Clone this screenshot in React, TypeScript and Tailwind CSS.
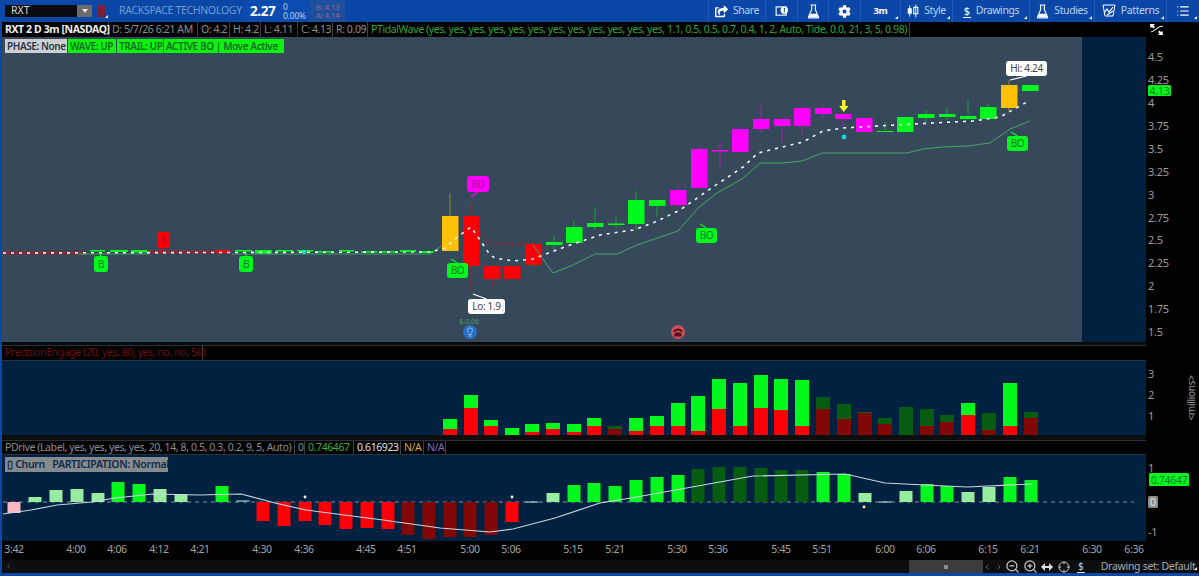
import type { ReactNode } from "react"
import { FaShareSquare, FaCog } from "react-icons/fa"
import { ChevronLeft, ChevronRight, Crosshair, List, Lightbulb, ZoomIn, ZoomOut } from "lucide-react"

const LIME = "#03f91d"
const RED = "#fb0007"
const PINK = "#ff00ff"
const ORANGE = "#ffc107"
const DKGREEN = "#075c12"
const DKRED = "#820808"

type Candle = [number, number, number, number, number, string]

// x, body top, body bottom, wick top, wick bottom, colour
const candles: Candle[] = [
  [450, 216, 251, 193, 251, ORANGE],
  [471, 216, 266, 203, 292, RED],
  [492, 266, 279, 266, 287, RED],
  [512, 266, 279, 266, 279, RED],
  [533, 244, 265, 242, 265, RED],
  [554, 242, 245, 236, 250, LIME],
  [574, 227, 243, 221, 243, LIME],
  [595, 223, 227, 207, 230, LIME],
  [616, 223.5, 225, 217, 227, LIME],
  [636, 200, 224, 191, 230, LIME],
  [657, 200, 206, 200, 217, LIME],
  [678, 190, 205, 183, 208, PINK],
  [699, 149, 188, 146, 188, PINK],
  [720, 150, 151.5, 142, 167, PINK],
  [740, 129, 152, 126, 152, PINK],
  [761, 119, 129, 104, 133, PINK],
  [782, 119, 126, 119, 143, PINK],
  [802, 108, 126, 106, 136, PINK],
  [823, 108, 114, 103, 118, PINK],
  [843, 114, 119, 114, 128, PINK],
  [864, 118, 132, 118, 132, PINK],
  [885, 131, 132, 122, 132, LIME],
  [905, 117, 132, 117, 132, LIME],
  [926, 114, 118, 110, 122, LIME],
  [947, 114, 117, 108, 120, LIME],
  [968, 116, 119, 100, 120, LIME],
  [988, 107, 119, 104, 119, LIME],
  [1009, 85, 108, 80, 112, ORANGE],
  [1030, 85, 91, 85, 92, LIME],
]

const flat: [number, number, number, number, string][] = [
  [90, 250, 15, 1.5, LIME],
  [110, 250, 18, 2, LIME],
  [131, 250, 16, 2.5, LIME],
  [215, 250, 15, 3, RED],
  [235, 250, 17, 1.5, LIME],
  [255, 250, 17, 3.5, LIME],
  [276, 250, 17, 1.5, LIME],
  [297, 250, 16, 1.5, LIME],
  [315, 251, 18, 1.5, LIME],
  [339, 250, 15, 1.5, LIME],
  [361, 251, 16, 1.5, LIME],
  [381, 251, 16, 1.5, LIME],
  [400, 250, 16, 2, LIME],
  [419, 251, 14, 2, LIME],
]

const volume: [number, number, number, boolean][] = [
  [450, 419, 429, true],
  [471, 395, 408, true],
  [491, 420, 426, true],
  [512, 428, 435, true],
  [532, 424, 432, true],
  [553, 423, 429, true],
  [574, 424, 432, true],
  [594, 418, 426, true],
  [615, 426, 429, false],
  [636, 418, 431, true],
  [657, 416, 426, true],
  [678, 403, 426, true],
  [698, 396, 431, true],
  [719, 379, 409, true],
  [740, 383, 426, true],
  [761, 375, 408, true],
  [781, 379, 410, true],
  [802, 380, 426, true],
  [823, 397, 409, false],
  [844, 404, 419, false],
  [865, 412, 413, false],
  [885, 418, 424, false],
  [906, 407, 435, false],
  [927, 409, 426, false],
  [947, 415, 422, false],
  [968, 403, 415, true],
  [989, 413, 430, false],
  [1010, 383, 426, true],
  [1031, 412, 418, false],
]

const LIGHT = "#98ec9f"
const drive: [number, number, number, string][] = [
  [14, 502, 513, "#ffb6c4"],
  [35, 497, 502, LIGHT],
  [56, 490, 502, LIGHT],
  [77, 489, 502, LIGHT],
  [98, 493, 502, LIGHT],
  [118, 482, 502, LIME],
  [139, 484, 502, LIME],
  [160, 489, 502, LIGHT],
  [181, 494, 502, LIGHT],
  [222, 486, 502, LIME],
  [243, 500.5, 501.5, "#cfe8e8"],
  [263, 502, 521, RED],
  [284, 502, 526, RED],
  [305, 502, 521, RED],
  [325, 502, 525, RED],
  [346, 502, 529, RED],
  [367, 502, 528, RED],
  [388, 502, 529, RED],
  [408, 502, 535, DKRED],
  [429, 502, 539, DKRED],
  [450, 502, 537, DKRED],
  [470, 502, 537, DKRED],
  [491, 502, 535, DKRED],
  [512, 502, 522, RED],
  [532, 501.5, 502.5, "#cfe8e8"],
  [553, 493, 502, LIGHT],
  [574, 485, 502, LIME],
  [594, 483, 502, LIME],
  [615, 486, 502, LIME],
  [636, 480, 502, LIME],
  [657, 477, 502, LIME],
  [678, 475, 502, LIME],
  [698, 469, 502, DKGREEN],
  [719, 467, 502, DKGREEN],
  [740, 467, 502, DKGREEN],
  [761, 468, 502, DKGREEN],
  [781, 470, 502, DKGREEN],
  [802, 470, 502, DKGREEN],
  [823, 472, 502, LIME],
  [844, 474, 502, LIME],
  [865, 493, 502, LIGHT],
  [885, 501.5, 502.5, "#cfe8e8"],
  [906, 491, 502, LIGHT],
  [927, 484, 502, LIME],
  [947, 486, 502, LIME],
  [968, 492, 502, LIGHT],
  [989, 487, 502, LIGHT],
  [1010, 477, 502, LIME],
  [1031, 480, 502, LIME],
]

const times: [string, number][] = [
  ["3:42", 14], ["4:00", 76], ["4:06", 117], ["4:12", 159], ["4:21", 200], ["4:30", 262],
  ["4:36", 304], ["4:45", 366], ["4:51", 407], ["5:00", 470], ["5:06", 511], ["5:15", 573],
  ["5:21", 615], ["5:30", 677], ["5:36", 718], ["5:45", 781], ["5:51", 822], ["6:00", 885],
  ["6:06", 926], ["6:15", 988], ["6:21", 1030], ["6:30", 1092], ["6:36", 1134],
]

const prices: [string, number][] = [
  ["4.5", 57], ["4.25", 80], ["4", 103], ["3.75", 126], ["3.5", 149], ["3.25", 172], ["3", 195],
  ["2.75", 218], ["2.5", 240], ["2.25", 263], ["2", 286], ["1.75", 309], ["1.5", 332],
]

const wave =
  "M3 253 L430 252 L445 248 L460 235 L471 227 L480 240 L490 255 L495 258 L513 261 L533 259 L543 255 L573 244 L600 235 L633 230 L653 223 L680 210 L713 187 L743 167 L758 153 L803 142 L823 131 L843 128 L913 124 L973 121 L1000 117 L1027 102"
const trail =
  "M533 245 L553 273 L573 265 L595 254 L617 254 L637 245 L678 231 L698 208 L717 193 L742 179 L760 163 L782 163 L802 161 L822 153 L907 153 L923 149 L943 147 L968 146 L990 143 L1010 129 L1030 121"
const driveLine =
  "M3 514 L31 510 L57 505 L92 502 L115 498 L153 494 L199 495 L241 494 L275 503 L306 510 L344 515 L383 520 L440 528 L490 532 L513 529 L555 518 L600 503 L631 498 L692 487 L753 476 L845 474 L885 483 L925 485 L967 487 L1032 484"

const FONT = "'Noto Sans', 'Open Sans', sans-serif"

function Bubble({ x, y, w, h, fill, text, tx, ty, color, size = 10 }: {
  x: number; y: number; w: number; h: number; fill: string; text: string
  tx: number; ty: number; color: string; size?: number
}) {
  const up = ty < y
  return (
    <g>
      <line x1={x + w / 2} y1={up ? y : y + h} x2={tx} y2={ty} stroke={fill} strokeWidth="1.2" />
      <rect x={x} y={y} width={w} height={h} rx="3" fill={fill} />
      <text x={x + w / 2} y={y + h / 2 + size * 0.36} textAnchor="middle" fontSize={size} letterSpacing="-0.3" fill={color} fontFamily={FONT}>{text}</text>
    </g>
  )
}

function ChartSvg() {
  return (
    <svg viewBox="2 37 1144 305" className="block h-[305px] w-[1144px]">
      <rect x="1082" y="37" width="64" height="305" fill="#00213f" />
      <path d="M3 253 H85 M147 252 H232" stroke="#8a2a38" strokeWidth="3" fill="none" />
      <path d="M78 254 H150 M232 254 L430 254 L443 245 L458 232" stroke="#3f9f5c" strokeWidth="1" fill="none" />
      <path d="M458 232 L478 230 L490 244 L533 244 L543 256" stroke="#8f2432" strokeWidth="1" fill="none" />
      {flat.map(([x, y, w, h, c]) => (
        <rect key={x} x={x} y={y} width={w} height={h} fill={c} />
      ))}
      {candles.map(([x, top, bottom, wt, wb, c]) => (
        <g key={x}>
          <line x1={x} x2={x} y1={wt} y2={wb} stroke={c} strokeWidth="1" opacity="0.5" />
          <rect x={x - 8} y={top} width="16.5" height={bottom - top} fill={c} />
        </g>
      ))}
      <path d={trail} stroke="#4aa463" strokeWidth="1" fill="none" />
      <path d={wave} stroke="#f2f5f7" strokeWidth="1.6" strokeDasharray="3 5" fill="none" />
      <circle cx="304" cy="252" r="2" fill="#19e6e6" />
      <circle cx="844" cy="137" r="2.4" fill="#19d4e6" />
      <path d="M842 100 h3.5 v6 h3 l-4.7 6 l-4.7 -6 h2.9 z" fill="#f5f22a" />
      <Bubble x={94} y={256} w={14} h={16} fill={LIME} text="B" tx={100} ty={253} color="#0a7a2a" />
      <Bubble x={239} y={256} w={14} h={16} fill={LIME} text="B" tx={246} ty={253} color="#0a7a2a" />
      <Bubble x={157} y={232} w={13} h={16} fill={RED} text="S" tx={160} ty={253} color="#a0101a" />
      <Bubble x={467} y={176} w={22} h={16} fill={PINK} text="BD" tx={471} ty={197} color="#a010a8" />
      <Bubble x={447} y={263} w={21} h={15} fill={LIME} text="BO" tx={451} ty={259} color="#0a7a2a" />
      <Bubble x={696} y={228} w={21} h={15} fill={LIME} text="BO" tx={700} ty={224} color="#0a7a2a" />
      <Bubble x={1007} y={136} w={21} h={15} fill={LIME} text="BO" tx={1011} ty={132} color="#0a7a2a" />
      <Bubble x={468} y={299} w={37} h={15} fill="#ffffff" text="Lo: 1.9" tx={473} ty={294} color="#444" />
      <Bubble x={1006} y={61} w={41} h={15} fill="#ffffff" text="Hi: 4.24" tx={1010} ty={80} color="#444" />
      <text x="469" y="324" textAnchor="middle" fontSize="7" fill="#4f9a70" fontFamily={FONT}>$-0.06</text>
      <circle cx="470" cy="332" r="7" fill="#2a6fc4" />
      <circle cx="678" cy="332" r="7" fill="#c8505c" />
      <foreignObject x="465" y="327" width="10" height="10">
        <Lightbulb size={10} color="#9fd0ff" />
      </foreignObject>
      <path d="M673.5 330.5 Q678 326.5 682.5 330.5 V332 H680.5 V330.8 H675.5 V332 H673.5 Z M675 332.5 H681 L682 336.5 H674 Z" fill="#5a1018" />
    </svg>
  )
}

function VolumeSvg() {
  return (
    <svg viewBox="2 361 1144 74" className="block h-[74px] w-[1144px]">
      {volume.map(([x, top, mid, bright]) => (
        <g key={x}>
          <rect x={x - 7} y={top} width="14" height={mid - top} fill={bright ? LIME : DKGREEN} />
          <rect x={x - 7} y={mid} width="14" height={435 - mid} fill={bright ? RED : DKRED} />
        </g>
      ))}
    </svg>
  )
}

function DriveSvg() {
  return (
    <svg viewBox="2 455 1144 86" className="block h-[86px] w-[1144px]">
      <line x1="3" x2="1134" y1="502" y2="502" stroke="#7f93a3" strokeWidth="1" strokeDasharray="4 4" />
      {drive.map(([x, top, bottom, c]) => (
        <rect key={x} x={x - 6.5} y={top} width="13" height={bottom - top} fill={c} />
      ))}
      <path d={driveLine} stroke="#c9d6e0" strokeWidth="1.2" fill="none" />
      <circle cx="305" cy="497" r="1.4" fill="#fff" />
      <circle cx="512" cy="497" r="1.4" fill="#fff" />
      <circle cx="864" cy="507" r="1.4" fill="#ffe9a0" />
    </svg>
  )
}

function AxisSvg() {
  return (
    <svg viewBox="1146 22 53 538" className="block h-[538px] w-[53px]">
      <g fill="#9c9c9c" fontSize="11" letterSpacing="-0.3" fontFamily={FONT}>
        {prices.map(([p, y]) => (
          <text key={p} x="1148" y={y + 4}>{p}</text>
        ))}
        <text x="1148" y="378">3</text>
        <text x="1148" y="399">2</text>
        <text x="1148" y="420">1</text>
        <text x="1148" y="472">1</text>
        <text x="1148" y="536">-1</text>
        <text transform="translate(1195 398) rotate(-90)" textAnchor="middle" fontSize="10">{"<millions>"}</text>
      </g>
      <rect x="1148" y="85" width="23" height="11" rx="1.5" fill={LIME} />
      <text x="1159.5" y="94.5" textAnchor="middle" fontSize="11" letterSpacing="-0.3" fill="#0f7a2c" fontFamily={FONT}>4.13</text>
      <rect x="1149" y="473" width="40" height="13" rx="1.5" fill={LIME} />
      <text x="1169" y="484" textAnchor="middle" fontSize="10.5" letterSpacing="-0.3" fill="#0f7a2c" fontFamily={FONT}>0.74647</text>
      <rect x="1148" y="496" width="10" height="12" rx="1.5" fill="#8c8c8c" />
      <text x="1153" y="506" textAnchor="middle" fontSize="11" fill="#e8e8e8" fontFamily={FONT}>0</text>
      <path d="M1151 32 C1157 31 1156 26 1163 26" stroke="#e6e6e6" strokeWidth="1.1" fill="none" />
      <path d="M1150 24 l5 0 l-1.5 1.5 l1.5 1.5 l-1.5 1.5 l-1.5 -1.5 l-1.5 1 z" fill="#fff" />
      <path d="M1163 35 l-5 0 l1.5 -1.5 l-1.5 -1.5 l1.5 -1.5 l1.5 1.5 l1.5 -1 z" fill="#fff" />
    </svg>
  )
}

function Flask({ className = "" }: { className?: string }) {
  return (
    <svg viewBox="0 0 14 16" className={className}>
      <path d="M4 1 H10 M5 1 V6 L1.5 14 Q1.2 15 2.5 15 H11.5 Q12.8 15 12.5 14 L9 6 V1" stroke="#fff" strokeWidth="1.2" fill="none" />
      <path d="M3.6 10.5 H10.4 L12 14.5 H2 Z" fill="#fff" />
    </svg>
  )
}

function Corner() {
  return <span className="absolute bottom-[3px] right-[2px] h-0 w-0 border-b-[3px] border-l-[3px] border-b-white border-l-transparent" />
}

function ToolBtn({ w, children, menu }: { w: number; children: ReactNode; menu?: boolean }) {
  return (
    <div className="relative flex h-full shrink-0 items-center justify-center gap-[5px] whitespace-nowrap border-l border-l-[#1f5cb8] text-[10.5px] tracking-[-0.4px] text-[#b9d2f0]" style={{ width: w }}>
      {children}
      {menu && <Corner />}
    </div>
  )
}

function Toolbar() {
  return (
    <div className="flex h-[22px] shrink-0 items-center bg-[#0a47a6] pl-[5px]">
      <div className="flex h-[12px] w-[87px] items-center justify-between bg-[#0b0b12] pl-[6px] text-[10.5px] text-[#d8d8d8]">
        RXT
        <span className="flex h-full w-[15px] items-center justify-center bg-[#6c6c6c]">
          <span className="h-0 w-0 border-x-[3.5px] border-t-[4px] border-x-transparent border-t-[#e8e8e8]" />
        </span>
      </div>
      <div className="relative ml-[5px] h-[12px] w-[8px] bg-[#7b2038]">
        <span className="absolute -bottom-px -right-[3px] h-0 w-0 border-b-[3px] border-l-[3px] border-b-white border-l-transparent" />
      </div>
      <span className="ml-[14px] w-[125px] whitespace-nowrap text-[10.5px] tracking-[-0.3px] text-[#6f9bd3]">RACKSPACE TECHNOLOGY</span>
      <div className="flex h-full items-center bg-[#0c4cb0] pl-[6px]">
        <span className="w-[33px] text-[13.5px] font-bold tracking-[-0.4px] text-white">2.27</span>
        <div className="w-[27px] text-[8.5px] leading-[9px] tracking-[-0.2px] text-[#b4cdec]">
          <div>0</div>
          <div>0.00%</div>
        </div>
      </div>
      <div className="flex h-full w-[35px] flex-col justify-center bg-[#1c4f9e] pl-[6px] text-[7.5px] leading-[8.5px] text-[#a06a80]">
        <div>B: 4.13</div>
        <div>A: 4.14</div>
      </div>
      <div className="flex-1" />
      <div className="flex h-full items-center">
        <ToolBtn w={57}>
          <FaShareSquare className="text-white" size={13} />
          <span>Share</span>
        </ToolBtn>
        <ToolBtn w={32}>
          <svg viewBox="0 0 14 12" className="h-[11px] w-[14px]">
            <rect x="0.6" y="1" width="11" height="9" fill="none" stroke="#fff" strokeWidth="1.2" />
            <circle cx="9.5" cy="4.5" r="4" fill="#fff" />
            <rect x="9" y="2" width="1.2" height="3" fill="#0a47a6" />
            <rect x="9" y="5.6" width="1.2" height="1.2" fill="#0a47a6" />
          </svg>
        </ToolBtn>
        <ToolBtn w={31}>
          <Flask className="h-[15px] w-[13px]" />
        </ToolBtn>
        <ToolBtn w={32}>
          <FaCog className="text-white" size={13} />
        </ToolBtn>
        <ToolBtn w={40} menu>
          <span className="text-[9.5px] font-bold text-white">3m</span>
        </ToolBtn>
        <ToolBtn w={52} menu>
          <svg viewBox="0 0 13 14" className="h-[14px] w-[12px]">
            <path d="M3 1 V13 M9.5 0 V14" stroke="#fff" strokeWidth="1" />
            <rect x="0.8" y="4" width="4.4" height="6" fill="#fff" />
            <rect x="7.3" y="3" width="4.4" height="7" fill="none" stroke="#fff" strokeWidth="1.2" />
          </svg>
          <span>Style</span>
        </ToolBtn>
        <ToolBtn w={77} menu>
          <span className="border-b border-b-white px-[1px] text-[11px] leading-[12px] text-white">$</span>
          <span>Drawings</span>
        </ToolBtn>
        <ToolBtn w={65} menu>
          <Flask className="h-[15px] w-[13px]" />
          <span>Studies</span>
        </ToolBtn>
        <ToolBtn w={72} menu>
          <svg viewBox="0 0 14 14" className="h-[14px] w-[14px]">
            <path d="M1 1 H13 M1 1 L3 12 H11 L13 1" stroke="#fff" strokeWidth="1" fill="none" />
            <path d="M2 9 L5 5 L7 8 L11 3 M5 11 L11 7" stroke="#fff" strokeWidth="1.2" fill="none" />
          </svg>
          <span>Patterns</span>
        </ToolBtn>
        <ToolBtn w={33} menu>
          <List className="text-white" size={14} />
        </ToolBtn>
      </div>
    </div>
  )
}

function Seg({ children, color = "#8d8d8d", bold, w }: { children: ReactNode; color?: string; bold?: boolean; w?: number }) {
  return (
    <div
      className={`flex h-full shrink-0 items-center whitespace-nowrap border-r border-r-[#3a3f44] px-[3px] text-[10.5px] tracking-[-0.4px] ${bold ? "font-bold" : ""}`}
      style={{ color, width: w }}
    >
      {children}
    </div>
  )
}

function ChartLabels() {
  return (
    <div className="absolute left-[3px] top-[2px] flex gap-px whitespace-nowrap text-[10px] font-semibold leading-[14px] tracking-[-0.4px]">
      <span className="w-[62px] bg-[#cfcfcf] pl-[2px] text-[#27364a]">PHASE: None</span>
      <span className="w-[48px] bg-[#0bf50b] pl-[2px] text-[#0b6a24]">WAVE: UP</span>
      <span className="w-[46px] bg-[#0bf50b] pl-[2px] text-[#0b6a24]">TRAIL: UP</span>
      <span className="w-[120px] bg-[#0bf50b] pl-[2px] text-[#0b6a24]">ACTIVE BO | Move Active</span>
    </div>
  )
}

function ChartColumn() {
  return (
    <div className="flex w-[1144px] shrink-0 flex-col bg-black">
      <div className="flex h-[15px] items-center">
        <Seg color="#f0f0f0" bold w={107}>RXT 2 D 3m [NASDAQ]</Seg>
        <Seg w={89}>D: 5/7/26 6:21 AM</Seg>
        <Seg w={32}>O: 4.2</Seg>
        <Seg w={31}>H: 4.2</Seg>
        <Seg w={37}>L: 4.11</Seg>
        <Seg w={35}>C: 4.13</Seg>
        <Seg w={35}>R: 0.09</Seg>
        <Seg color="#2fa53a" w={542}>PTidalWave (yes, yes, yes, yes, yes, yes, yes, yes, yes, yes, yes, yes, 1.1, 0.5, 0.5, 0.7, 0.4, 1, 2, Auto, Tide, 0.0, 21, 3, 5, 0.98)</Seg>
      </div>
      <div className="relative h-[305px] bg-[#36495b]">
        <ChartSvg />
        <ChartLabels />
      </div>
      <div className="h-[3px] bg-[#0a0a0a]" />
      <div className="flex h-[16px] items-center border-y border-y-[#26323c]">
        <Seg color="#6e0d12" w={201}>PrecisionEngage (20, yes, 80, yes, no, no, 50)</Seg>
      </div>
      <div className="h-[74px] bg-[#00213f]">
        <VolumeSvg />
      </div>
      <div className="h-[5px] bg-[#0d0d0d]" />
      <div className="flex h-[15px] items-center border-y border-y-[#26323c]">
        <Seg w={293}>PDrive (Label, yes, yes, yes, yes, 20, 14, 8, 0.5, 0.3, 0.2, 9, 5, Auto)</Seg>
        <Seg w={10}>0</Seg>
        <Seg color="#3cae3c" w={49}>0.746467</Seg>
        <Seg color="#e0e0e0" w={47}>0.616923</Seg>
        <Seg color="#d9a441" w={23}>N/A</Seg>
        <Seg color="#7a6fd0" w={22}>N/A</Seg>
      </div>
      <div className="relative h-[86px] bg-[#00213f]">
        <DriveSvg />
        <div className="absolute left-[3px] top-[2px] flex h-[15px] w-[163px] items-center whitespace-pre bg-[#858a8e] pl-[2px] text-[10.5px] font-semibold tracking-[-0.3px] text-[#0e2b48]">
          {"▯ Churn   PARTICIPATION: Normal"}
        </div>
      </div>
      <svg viewBox="2 541 1144 19" className="block h-[19px] w-[1144px]">
        {times.map(([t, x]) => (
          <text key={t} x={x} y="553" textAnchor="middle" fontSize="10.5" letterSpacing="-0.3" fill="#a4a4a4" fontFamily={FONT}>{t}</text>
        ))}
      </svg>
    </div>
  )
}

function ScrollRow() {
  return (
    <div className="relative flex h-[13px] shrink-0 items-center bg-[#0d0e10] pl-[3px] text-[#c8c8c8]">
      <ChevronLeft size={7} className="text-[#888]" />
      <div className="ml-[897px] flex h-full w-[74px] items-center justify-center bg-[#3b3c3e]">
        <span className="h-[4px] w-[4px] bg-[#8d8d8d]" />
      </div>
      <ChevronLeft size={8} className="text-[#888]" />
      <ChevronRight size={8} className="ml-[4px] text-[#888]" />
      <ZoomOut size={15} className="ml-[2px]" />
      <ZoomIn size={15} className="ml-[3px]" />
      <svg viewBox="0 0 12 8" className="ml-[3px] h-[8px] w-[12px]">
        <path d="M0 4 L4 0 V8 Z M12 4 L8 0 V8 Z" fill="#ddd" />
        <rect x="4" y="3" width="4" height="2" fill="#ddd" />
      </svg>
      <Crosshair size={12} className="ml-[5px]" />
      <span className="ml-[7px] border-b border-b-[#ddd] px-px text-[10px] leading-[11px]">$</span>
      <span className="ml-[16px] whitespace-nowrap text-[10.5px] tracking-[-0.3px] text-[#a8a8a8]">Drawing set: Default</span>
      <Corner />
    </div>
  )
}

export default function App() {
  return (
    <div className="flex h-[576px] w-[1199px] flex-col overflow-hidden bg-[#0a47a6]" style={{ fontFamily: FONT }}>
      <Toolbar />
      <div className="flex flex-1 flex-col pl-[2px]">
        <div className="flex h-[538px] shrink-0">
          <ChartColumn />
          <div className="w-[53px] shrink-0 bg-black">
            <AxisSvg />
          </div>
        </div>
        <ScrollRow />
      </div>
    </div>
  )
}
